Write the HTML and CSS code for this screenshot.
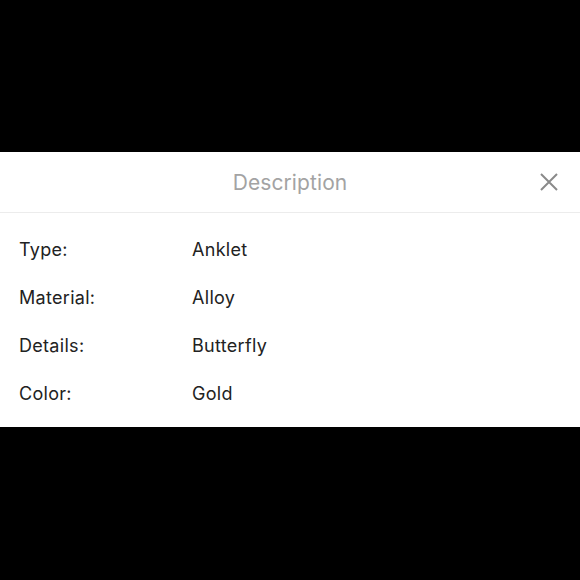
FILE: index.html
```html
<!DOCTYPE html>
<html>
<head>
<meta charset="utf-8">
<link rel="stylesheet" href="styles.css">
</head>
<body>
<div class="screen">
  <div class="top"></div>
  <div class="sheet">
    <div class="header">
      <div class="title">Description</div>
      <button class="close" aria-label="Close">
        <svg width="18" height="18" viewBox="0 0 18 18"><path d="M1 1 L17 17 M17 1 L1 17" stroke="#8a8a8a" stroke-width="2" fill="none"/></svg>
      </button>
    </div>
    <div class="rows">
      <div class="row"><span class="label">Type:</span><span class="value">Anklet</span></div>
      <div class="row"><span class="label">Material:</span><span class="value">Alloy</span></div>
      <div class="row"><span class="label">Details:</span><span class="value">Butterfly</span></div>
      <div class="row"><span class="label">Color:</span><span class="value">Gold</span></div>
    </div>
  </div>
</div>
</body>
</html>
```

FILE: styles.css
```css
html, body {
  margin: 0;
  padding: 0;
  background: #000;
}
.screen {
  width: 580px;
  height: 580px;
  display: flex;
  flex-direction: column;
  font-family: Inter, "Liberation Sans", sans-serif;
}
.top {
  height: 152px;
}
.sheet {
  background: #fff;
  height: 275px;
}
.header {
  height: 60px;
  border-bottom: 1px solid #ececec;
  display: flex;
  align-items: center;
  justify-content: center;
  position: relative;
}
.title {
  font-size: 21px;
  color: #a3a3a3;
  letter-spacing: 0.1px;
}
.close {
  position: absolute;
  right: 22px;
  top: 21px;
  width: 18px;
  height: 18px;
  padding: 0;
  border: 0;
  background: none;
  display: flex;
}
.rows {
  padding: 12px 0 10px 19px;
  display: flex;
  flex-direction: column;
}
.row {
  height: 48px;
  display: flex;
  align-items: center;
  font-size: 18px;
  letter-spacing: 0.3px;
  color: #222;
}
.label {
  width: 173px;
}
```
